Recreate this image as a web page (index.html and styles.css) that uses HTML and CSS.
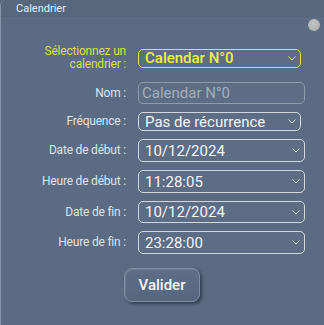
FILE: index.html
```html
<!DOCTYPE html>
<html lang="fr">
<head>
<meta charset="utf-8">
<title>Calendrier</title>
<link rel="stylesheet" href="styles.css">
</head>
<body>
<div class="window">
  <div class="titlebar">Calendrier</div>
  <div class="dot"></div>
  <div class="form">
    <div class="row row-first">
      <div class="label label-yellow">Sélectionnez un<br>calendrier :</div>
      <div class="box box-select box-yellow h19">
        <span class="value value-yellow">Calendar N°0</span>
        <svg class="chev" width="8" height="5" viewBox="0 0 8 5"><polyline points="0.5,0.5 4,4 7.5,0.5" fill="none" stroke="#e6ec7a" stroke-width="1"/></svg>
      </div>
    </div>
    <div class="row">
      <div class="label">Nom :</div>
      <div class="box box-wide box-disabled h22">
        <span class="value value-dim">Calendar N°0</span>
      </div>
    </div>
    <div class="row">
      <div class="label">Fréquence :</div>
      <div class="box box-select h19">
        <span class="value">Pas de récurrence</span>
        <svg class="chev" width="8" height="5" viewBox="0 0 8 5"><polyline points="0.5,0.5 4,4 7.5,0.5" fill="none" stroke="#e4e7ec" stroke-width="1"/></svg>
      </div>
    </div>
    <div class="row">
      <div class="label">Date de début :</div>
      <div class="box box-wide h23">
        <span class="value">10/12/2024</span>
        <svg class="chev" width="8" height="5" viewBox="0 0 8 5"><polyline points="0.5,0.5 4,4 7.5,0.5" fill="none" stroke="#e4e7ec" stroke-width="1"/></svg>
      </div>
    </div>
    <div class="row">
      <div class="label">Heure de début :</div>
      <div class="box box-wide h23">
        <span class="value">11:28:05</span>
        <svg class="chev" width="8" height="5" viewBox="0 0 8 5"><polyline points="0.5,0.5 4,4 7.5,0.5" fill="none" stroke="#e4e7ec" stroke-width="1"/></svg>
      </div>
    </div>
    <div class="row">
      <div class="label">Date de fin :</div>
      <div class="box box-wide h22">
        <span class="value">10/12/2024</span>
        <svg class="chev" width="8" height="5" viewBox="0 0 8 5"><polyline points="0.5,0.5 4,4 7.5,0.5" fill="none" stroke="#e4e7ec" stroke-width="1"/></svg>
      </div>
    </div>
    <div class="row">
      <div class="label">Heure de fin :</div>
      <div class="box box-wide h23">
        <span class="value">23:28:00</span>
        <svg class="chev" width="8" height="5" viewBox="0 0 8 5"><polyline points="0.5,0.5 4,4 7.5,0.5" fill="none" stroke="#e4e7ec" stroke-width="1"/></svg>
      </div>
    </div>
    <div class="actions">
      <button class="btn">Valider</button>
    </div>
  </div>
</div>
</body>
</html>
```

FILE: styles.css
```css
* { box-sizing: border-box; }
html, body { margin: 0; padding: 0; background: #5b6b83; }
body { font-family: Roboto, "Liberation Sans", sans-serif; }

.window {
  position: relative;
  width: 324px;
  height: 325px;
  background: #5b6b83;
  border-left: 1px solid #8895a8;
  border-top-left-radius: 6px;
  overflow: hidden;
}

.titlebar {
  height: 19px;
  padding-left: 15px;
  font-size: 11px;
  line-height: 18px;
  color: #e8ebf0;
  background: #57677e;
  border-bottom: 1px solid #617188;
}

.dot {
  position: absolute;
  top: 19px;
  right: 4px;
  width: 12px;
  height: 12px;
  border-radius: 50%;
  background: radial-gradient(circle at 45% 40%, #c4c4c4, #a8a8a8);
}

.form {
  display: flex;
  flex-direction: column;
  gap: 8px;
  padding-top: 25px;
}

.row {
  display: flex;
  align-items: center;
}

.row-first {
  height: 28px;
  margin-bottom: 2px;
}

.label {
  width: 125px;
  flex: none;
  text-align: right;
  font-size: 12px;
  line-height: 13px;
  color: #dfe2e7;
  letter-spacing: -0.2px;
}

.label-yellow { color: #d9df48; }

.box {
  margin-left: 12px;
  display: flex;
  align-items: center;
  justify-content: space-between;
  border: 1.5px solid #d2d7de;
  border-radius: 5px;
  padding: 0 4px 0 6px;
  background: #5d6d85;
}

.box-select { width: 163px; }
.box-wide { width: 167px; }
.h19 { height: 19px; }
.h22 { height: 22px; }
.h23 { height: 23px; }

.box-yellow { border-color: #dfe356; }
.box-disabled { border-color: #8f9bab; padding-left: 3px; }

.value {
  font-size: 15px;
  color: #f4f5f7;
  white-space: nowrap;
}

.value-yellow { color: #eef03c; font-weight: 500; }
.value-dim { color: #a4adba; }

.chev { flex: none; }

.actions {
  display: flex;
  justify-content: flex-start;
  padding-left: 123px;
  margin-top: 6px;
}

.btn {
  width: 76px;
  height: 34px;
  border-radius: 8px;
  border: 1px solid #7f8da2;
  background: linear-gradient(#5e6e86, #576780);
  box-shadow: 2px 2px 3px rgba(20, 28, 40, 0.55), inset 1px 1px 0 rgba(255,255,255,0.12);
  color: #f5f6f8;
  font-family: Roboto, "Liberation Sans", sans-serif;
  font-size: 15px;
  font-weight: 500;
  padding: 0;
}
```
